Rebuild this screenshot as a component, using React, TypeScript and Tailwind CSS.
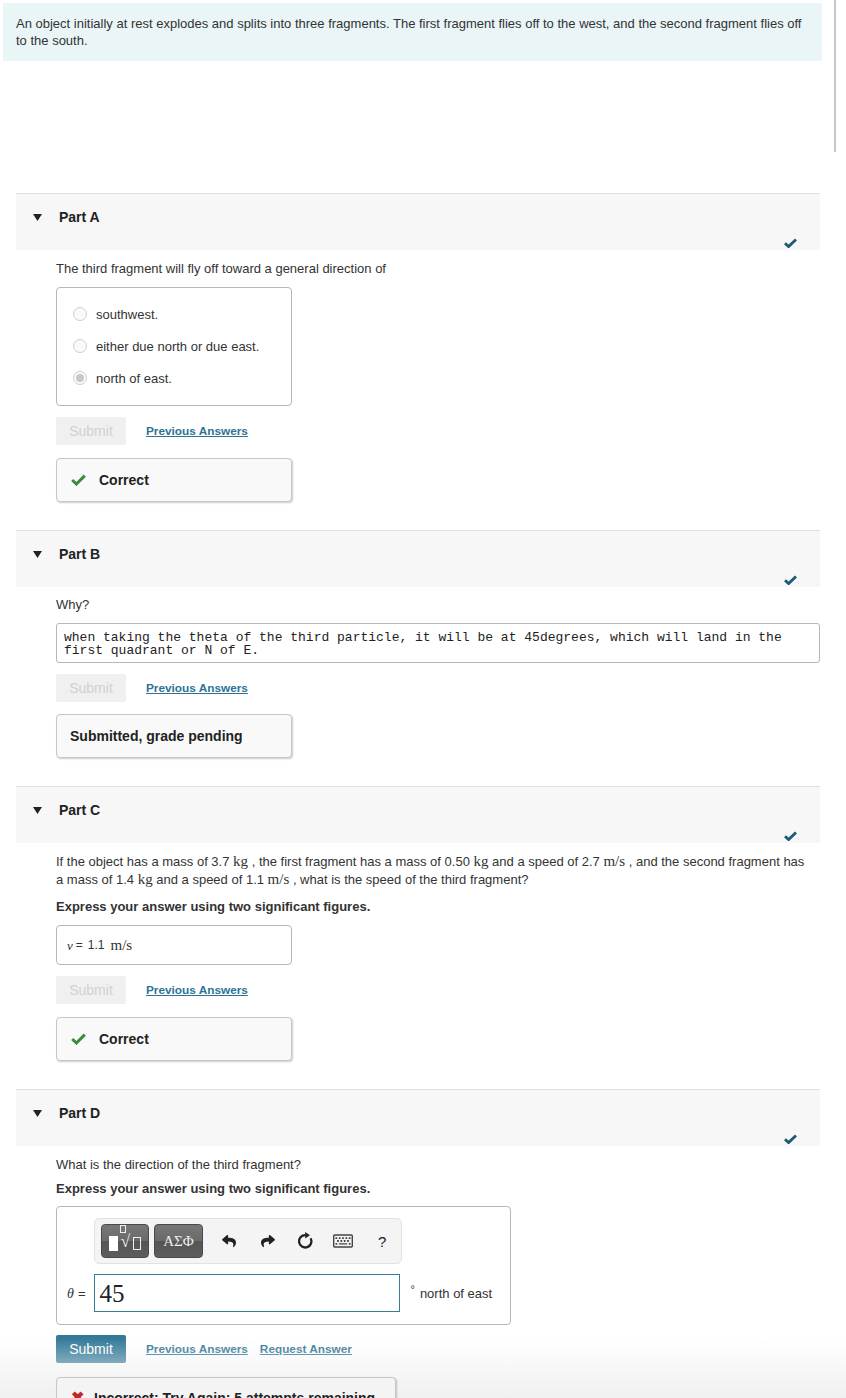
import React from "react";
import { FaReply, FaShare, FaRegKeyboard } from "react-icons/fa";

const sans = "font-['Liberation_Sans',Arial,sans-serif]";
const serif = "font-['Liberation_Serif','Times_New_Roman',serif]";

function Tri() {
  return (
    <svg width="9" height="7" viewBox="0 0 9 7" className="block">
      <path d="M0 0 L9 0 L4.5 7 Z" fill="#222" />
    </svg>
  );
}

function TealCheck() {
  return (
    <svg width="13" height="10" viewBox="0 0 13 10" className="block">
      <path d="M1 5.2 L4.6 8.6 L12 1.4" stroke="#1f5a73" strokeWidth="2.8" fill="none" strokeLinejoin="miter" />
    </svg>
  );
}

function GreenCheck() {
  return (
    <svg width="15" height="12" viewBox="0 0 15 12" className="block">
      <path d="M1.2 6 L5.4 10 L13.8 1.6" stroke="#3b8a3e" strokeWidth="3" fill="none" />
    </svg>
  );
}

function ResetIcon() {
  return (
    <svg width="18" height="18" viewBox="0 0 18 18" className="block">
      <path d="M13.6 6.2 A6.2 6.2 0 1 1 8.6 3.1" stroke="#222" strokeWidth="2.3" fill="none" />
      <path d="M8.2 0 L13 3.2 L8.2 6.4 Z" fill="#222" />
    </svg>
  );
}

function PartHeader({ label }: { label: string }) {
  return (
    <div className="relative ml-[16px] w-[804px] h-[57px] border-t border-[#e0e0e0] bg-[#f7f7f7]">
      <div className="flex items-center pt-[14px]">
        <div className="ml-[17px] w-[26px]">
          <Tri />
        </div>
        <span className="text-[14px] font-bold text-[#222] leading-[18px]">{label}</span>
      </div>
      <div className="absolute right-[23px] bottom-[2px]">
        <TealCheck />
      </div>
    </div>
  );
}

function SubmitRow({ active, request }: { active?: boolean; request?: boolean }) {
  return (
    <div className="flex items-center h-[28px]">
      <div
        className={
          active
            ? "w-[70px] h-[28px] rounded-[2px] bg-[#337a99] text-white text-[14px] flex items-center justify-center"
            : "w-[70px] h-[28px] rounded-[2px] bg-[#f0f0f0] text-[#d0d0d0] text-[14px] flex items-center justify-center"
        }
      >
        Submit
      </div>
      <span className="ml-[20px] text-[11.8px] font-bold text-[#2d7396] underline">Previous Answers</span>
      {request && (
        <span className="ml-[12px] text-[11.8px] font-bold text-[#2d7396] underline">Request Answer</span>
      )}
    </div>
  );
}

function FeedbackBox({ children }: { children: React.ReactNode }) {
  return (
    <div className="w-[236px] h-[44px] rounded-[4px] border border-[#c6c6c6] bg-[#f9f9f9] shadow-[1px_1px_2px_rgba(0,0,0,0.2)] flex items-center">
      {children}
    </div>
  );
}

function Radio({ selected }: { selected?: boolean }) {
  return (
    <div className="w-[14px] h-[14px] rounded-full border border-[#cfcfcf] bg-[#fafafa] flex items-center justify-center">
      {selected && <div className="w-[8px] h-[8px] rounded-full bg-[#c8c8c8]" />}
    </div>
  );
}

function Kg() {
  return <span className={`${serif} text-[15px] leading-[14px]`}>kg</span>;
}
function Ms() {
  return <span className={`${serif} text-[15px] leading-[14px]`}>m/s</span>;
}

export default function App() {
  return (
    <div className={`${sans} relative bg-white text-[#333] text-[13px] leading-[17px] w-[846px] h-[1398px] overflow-hidden`}>
      <div className="absolute left-[834px] top-0 w-[2px] h-[152px] bg-[#c6c6ce]" />
      <div className="absolute left-0 bottom-0 w-[846px] h-[60px] bg-[linear-gradient(rgba(242,242,242,0),rgba(240,240,240,1))]" />

      {/* Intro */}
      <div className="pt-[3px]">
        <div className="ml-[3px] w-[819px] bg-[#e9f5f7] pl-[13px] pr-[14px] pt-[12px] pb-[12px]">
          An object initially at rest explodes and splits into three fragments. The first fragment flies off to the
          west, and the second fragment flies off to the south.
        </div>
      </div>

      {/* Part A */}
      <div className="mt-[132px]">
        <PartHeader label="Part A" />
        <div className="ml-[56px] pt-[10px]">
          <div>The third fragment will fly off toward a general direction of</div>
          <div className="mt-[10px] w-[236px] h-[119px] rounded-[4px] border border-[#b7b7b7] pl-[16px] pt-[10px]">
            {[
              ["southwest.", false],
              ["either due north or due east.", false],
              ["north of east.", true],
            ].map(([t, s]) => (
              <div key={t as string} className="flex items-center h-[32px]">
                <Radio selected={s as boolean} />
                <span className="ml-[9px]">{t as string}</span>
              </div>
            ))}
          </div>
          <div className="mt-[11px]">
            <SubmitRow />
          </div>
          <div className="mt-[13px]">
            <FeedbackBox>
              <div className="ml-[14px]">
                <GreenCheck />
              </div>
              <span className="ml-[13px] text-[14px] font-bold text-[#222]">Correct</span>
            </FeedbackBox>
          </div>
        </div>
      </div>

      {/* Part B */}
      <div className="mt-[28px]">
        <PartHeader label="Part B" />
        <div className="ml-[56px] pt-[9px]">
          <div>Why?</div>
          <div className="mt-[10px] w-[764px] h-[40px] rounded-[3px] border border-[#b7b7b7] pl-[7px] pt-[7px] font-['Liberation_Mono',monospace] text-[13px] leading-[13px] text-[#222]">
            when taking the theta of the third particle, it will be at 45degrees, which will land in the
            <br />
            first quadrant or N of E.
          </div>
          <div className="mt-[11px]">
            <SubmitRow />
          </div>
          <div className="mt-[12px]">
            <FeedbackBox>
              <span className="ml-[13px] text-[14px] font-bold text-[#222]">Submitted, grade pending</span>
            </FeedbackBox>
          </div>
        </div>
      </div>

      {/* Part C */}
      <div className="mt-[28px]">
        <PartHeader label="Part C" />
        <div className="ml-[56px] pt-[10px] pr-[37px]">
          <div className="leading-[18px]">
            If the object has a mass of 3.7 <Kg /> , the first fragment has a mass of 0.50 <Kg /> and a speed of 2.7{" "}
            <Ms /> , and the second fragment has a mass of 1.4 <Kg /> and a speed of 1.1 <Ms /> , what is the speed of
            the third fragment?
          </div>
          <div className="mt-[9px] font-bold">Express your answer using two significant figures.</div>
          <div className="mt-[10px] w-[236px] h-[40px] rounded-[4px] border border-[#b7b7b7] flex items-center pl-[10px] text-[12px]">
            <span className={`${serif} italic text-[13px]`}>v</span>
            <span className="ml-[3px]">=</span>
            <span className="ml-[5px]">1.1</span>
            <span className={`${serif} text-[15px] ml-[6px]`}>m/s</span>
          </div>
          <div className="mt-[11px]">
            <SubmitRow />
          </div>
          <div className="mt-[13px]">
            <FeedbackBox>
              <div className="ml-[14px]">
                <GreenCheck />
              </div>
              <span className="ml-[13px] text-[14px] font-bold text-[#222]">Correct</span>
            </FeedbackBox>
          </div>
        </div>
      </div>

      {/* Part D */}
      <div className="mt-[28px]">
        <PartHeader label="Part D" />
        <div className="ml-[56px] pt-[10px]">
          <div>What is the direction of the third fragment?</div>
          <div className="mt-[7px] font-bold">Express your answer using two significant figures.</div>
          <div className="mt-[9px] w-[455px] h-[119px] rounded-[4px] border border-[#b7b7b7] pt-[11px]">
            <div className="ml-[37px] w-[308px] h-[46px] rounded-[5px] border border-[#e2e2e2] bg-[#f4f4f4] flex items-center pl-[6px]">
              <div className="w-[48px] h-[34px] rounded-[4px] border border-[#4a4a4a] bg-[linear-gradient(#777_0%,#6a6a6a_50%,#555_51%,#5d5d5d_100%)] flex items-center justify-center gap-[3px]">
                <div className="w-[9px] h-[15px] bg-white mt-[5px]" />
                <span className={`${serif} text-[#eee] text-[17px] leading-none relative`}>
                  <span className="absolute left-[-1px] top-[-8px] w-[6px] h-[8px] border border-[#eee]" />
                  √
                </span>
                <div className="w-[8px] h-[13px] border border-[#eee] mt-[4px]" />
              </div>
              <div className="ml-[5px] w-[49px] h-[34px] rounded-[4px] border border-[#4a4a4a] bg-[linear-gradient(#777_0%,#6a6a6a_50%,#555_51%,#5d5d5d_100%)] flex items-center justify-center">
                <span className={`${serif} text-[#eee] text-[15px] leading-none`}>ΑΣΦ</span>
              </div>
              <FaReply className="ml-[19px] text-[#222]" size={14} />
              <FaShare className="ml-[25px] text-[#222]" size={14} />
              <div className="ml-[22px]">
                <ResetIcon />
              </div>
              <FaRegKeyboard className="ml-[18px] text-[#444]" size={20} />
              <span className="ml-[25px] text-[15px] text-[#222]">?</span>
            </div>
            <div className="mt-[10px] flex items-center">
              <span className={`${serif} italic text-[14px] ml-[10px]`}>θ</span>
              <span className="ml-[4px] text-[13px]">=</span>
              <div className="ml-[9px] w-[306px] h-[38px] border border-[#3a7c98] flex items-center pl-[4px]">
                <span className={`${serif} text-[25px] text-[#222]`}>45</span>
              </div>
              <span className="ml-[10px] text-[11px] self-start mt-[7px]">°</span>
              <span className="ml-[5px]">north of east</span>
            </div>
          </div>
          <div className="mt-[10px]">
            <SubmitRow active request />
          </div>
          <div className="relative mt-[14px] w-[340px] h-[60px] rounded-[4px] border border-[#c6c6c6] bg-[#f4f4f4] shadow-[1px_1px_2px_rgba(0,0,0,0.2)] flex items-start pt-[12px]">
            <span className="ml-[14px] text-[#c0282d] font-bold text-[16px] leading-none">✖</span>
            <span className="ml-[10px] text-[14px] font-bold text-[#222]">Incorrect; Try Again; 5 attempts remaining</span>
          </div>
        </div>
      </div>
    </div>
  );
}
